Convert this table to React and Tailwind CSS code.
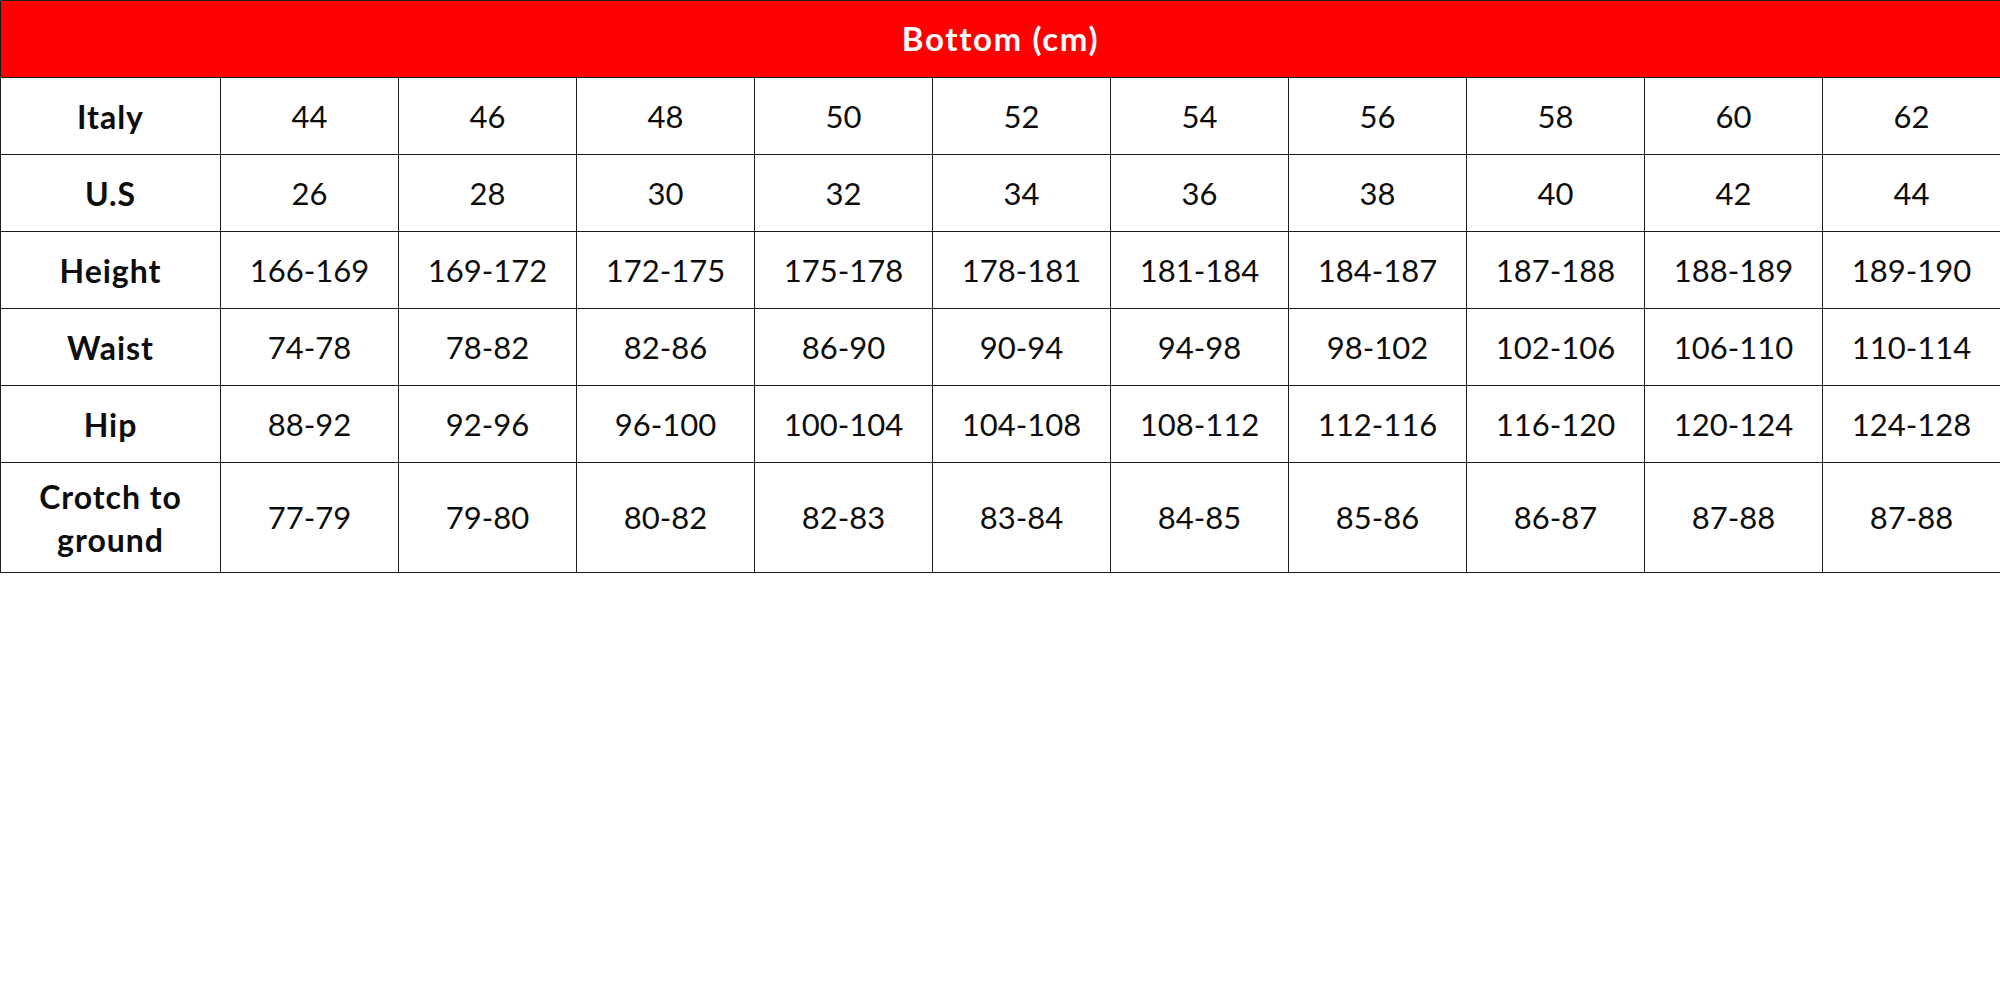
export default function App() {
  const rows = [
    ["Italy", "44", "46", "48", "50", "52", "54", "56", "58", "60", "62"],
    ["U.S", "26", "28", "30", "32", "34", "36", "38", "40", "42", "44"],
    ["Height", "166-169", "169-172", "172-175", "175-178", "178-181", "181-184", "184-187", "187-188", "188-189", "189-190"],
    ["Waist", "74-78", "78-82", "82-86", "86-90", "90-94", "94-98", "98-102", "102-106", "106-110", "110-114"],
    ["Hip", "88-92", "92-96", "96-100", "100-104", "104-108", "108-112", "112-116", "116-120", "120-124", "124-128"],
    ["Crotch to ground", "77-79", "79-80", "80-82", "82-83", "83-84", "84-85", "85-86", "86-87", "87-88", "87-88"],
  ];
  return (
    <div className="w-[2000px] h-[1000px] bg-white" style={{ fontFamily: "Lato, 'Noto Sans', sans-serif" }}>
      <table className="w-[2000px] table-fixed border-collapse text-[#0d0d0d]">
        <colgroup>
          <col className="w-[220px]" />
          {Array.from({ length: 10 }).map((_, i) => (
            <col key={i} className="w-[178px]" />
          ))}
        </colgroup>
        <thead>
          <tr className="h-[77px]">
            <th colSpan={11} className="border border-[#1c1c1c] bg-[#ff0000] text-white text-[33px] tracking-[0.05em] font-bold text-center align-middle">
              Bottom (cm)
            </th>
          </tr>
        </thead>
        <tbody>
          {rows.map((r, ri) => (
            <tr key={ri} className={ri === 5 ? "h-[110px]" : "h-[77px]"}>
              {r.map((c, ci) => (
                <td
                  key={ci}
                  className={
                    ci === 0
                      ? "border border-[#1c1c1c] text-center align-middle text-[32px] tracking-[0.03em] font-bold leading-[43px] px-4"
                      : "border border-[#1c1c1c] text-center align-middle text-[31px] font-normal"
                  }
                >
                  {c}
                </td>
              ))}
            </tr>
          ))}
        </tbody>
      </table>
    </div>
  );
}
